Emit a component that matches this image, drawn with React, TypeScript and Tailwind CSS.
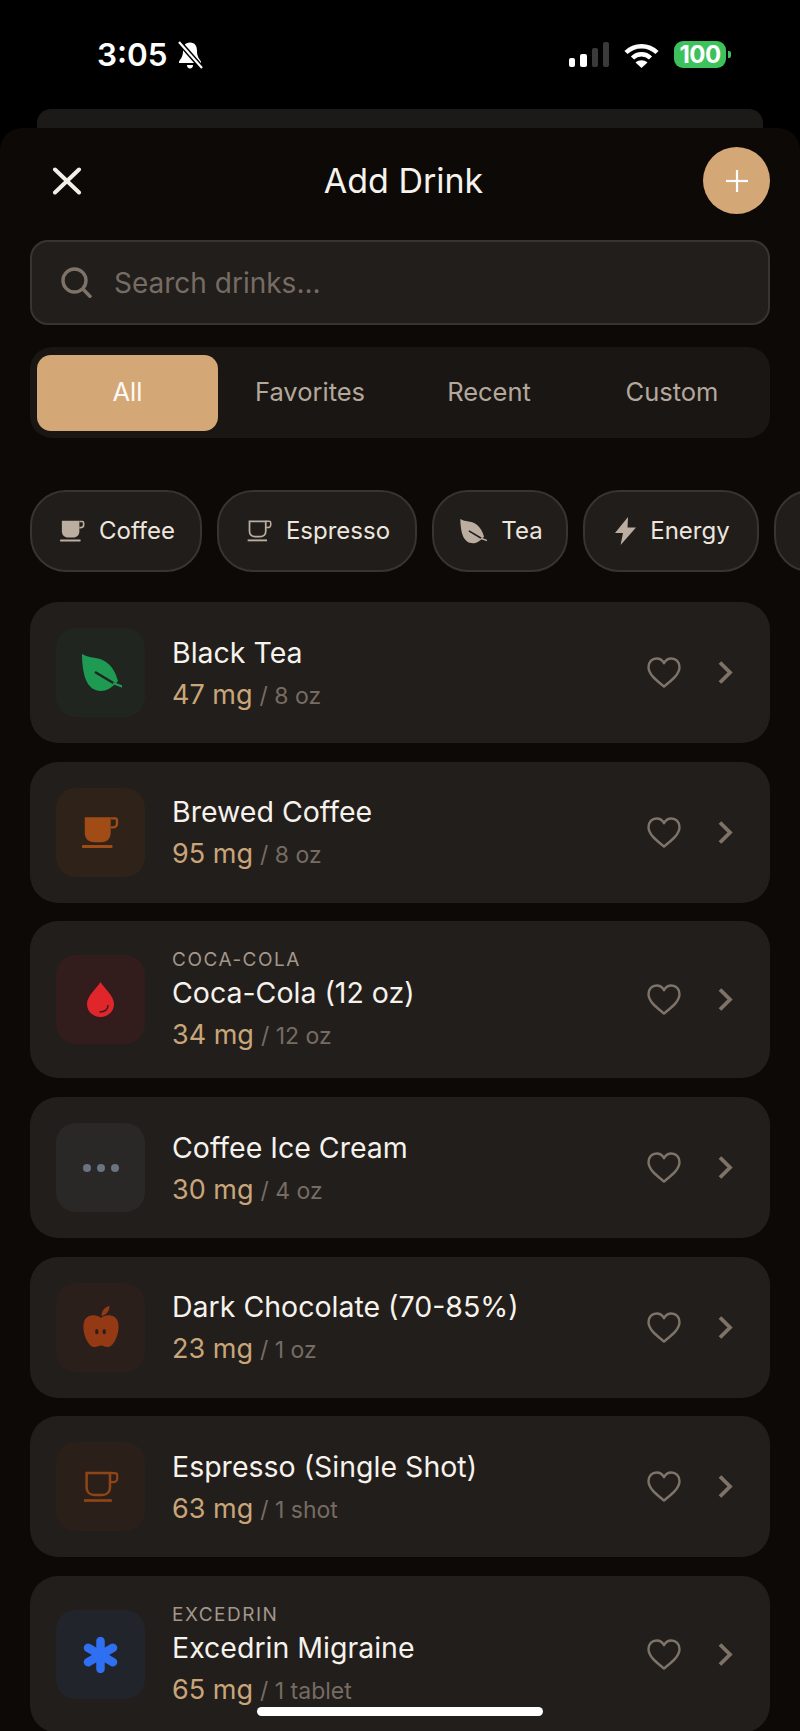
import type { ReactNode } from "react";

const CupFilled = ({ className }: { className: string }) => (
  <svg viewBox="0 0 40 35" className={className} fill="currentColor">
    <path d="M3 1H31V18C31 24 27 28 21 28H13C7 28 3 24 3 18Z" />
    <path d="M31 2.200H35.500C37 2.200 37.800 3 37.800 4.500V8C37.800 10.300 36 12 33.500 12H31" fill="none" stroke="currentColor" strokeWidth="2.600" />
    <rect x="0" y="31" width="33" height="3.200" rx="1" />
  </svg>
);

const CupOutline = ({ className }: { className: string }) => (
  <svg viewBox="0 0 40 35" className={className} fill="none" stroke="currentColor" strokeWidth="2.800">
    <path d="M4 2H30V18C30 23 26.500 26.500 21 26.500H13C7.500 26.500 4 23 4 18Z" />
    <path d="M30 2H35.500C37 2 38 3 38 4.500V8C38 10.500 36 12 33.500 12H30" strokeWidth="2.400" />
    <path d="M1 32.500H32" strokeWidth="3" />
  </svg>
);

const Leaf = ({ className, vein }: { className: string; vein: string }) => (
  <svg viewBox="0 0 40 38" className={className}>
    <path d="M0 0C8 5 16 2 24 8C31 13 34 20 36 27C30 34 24 37 19 37C12 37 7 33 4 26C1 19 0 8 0 0Z" fill="currentColor" />
    <path d="M13 18L33 30" fill="none" stroke={vein} strokeWidth="2.400" />
    <path d="M32 29.500L40 32.500" fill="none" stroke="currentColor" strokeWidth="2.400" strokeLinecap="round" />
  </svg>
);

const Bolt = ({ className }: { className: string }) => (
  <svg viewBox="0 0 21 28" className={className} fill="currentColor">
    <path d="M13 0L0 16H8L5.600 28L21 10.500H12.500Z" />
  </svg>
);

const Drop = ({ className }: { className: string }) => (
  <svg viewBox="0 0 27 35" className={className}>
    <path d="M13.500 0C9 7 0 14 0 22C0 29.500 6 35 13.500 35C21 35 27 29.500 27 22C27 14 18 7 13.500 0Z" fill="currentColor" />
    <path d="M21 23.500C21 27 18 30 13 30" fill="none" stroke="#341d1c" strokeWidth="1.500" strokeLinecap="round" />
  </svg>
);

const Dots = () => (
  <div className="flex gap-[6px]">
    <span className="h-[8px] w-[8px] rounded-full bg-[#6b7280]" />
    <span className="h-[8px] w-[8px] rounded-full bg-[#6b7280]" />
    <span className="h-[8px] w-[8px] rounded-full bg-[#6b7280]" />
  </div>
);

const Apple = ({ className }: { className: string }) => (
  <svg viewBox="0 0 37 42" className={className}>
    <path d="M18.500 12C14 8 4 8 1.500 16C-1 25 5 41 12 41C15 41 16.500 39.500 18.500 39.500C20.500 39.500 22 41 25 41C32 41 38 25 35.500 16C33 8 23 8 18.500 12Z" fill="currentColor" />
    <path d="M19 10C19 5 22 1 27 0C27 5 24 9 19 10Z" fill="currentColor" />
    <ellipse cx="14.300" cy="25.700" rx="1.700" ry="2.600" fill="#2a1f1a" />
    <ellipse cx="21.700" cy="25.700" rx="1.700" ry="2.600" fill="#2a1f1a" />
  </svg>
);

const Asterisk = ({ className }: { className: string }) => (
  <svg viewBox="0 0 35 36" className={className} fill="none" stroke="currentColor" strokeWidth="8.500" strokeLinecap="round">
    <path d="M17.500 4V32" />
    <path d="M5 10.800L30 25.200" />
    <path d="M30 10.800L5 25.200" />
  </svg>
);

const Heart = () => (
  <svg viewBox="0 0 34 31" className="h-[31px] w-[34px] text-[#7d7369]" fill="none" stroke="currentColor" strokeWidth="2.400" strokeLinejoin="round">
    <path d="M17 29.500C11 24.500 1.500 18 1.500 10C1.500 5 5 1.500 9.500 1.500C12.800 1.500 15.500 3.300 17 6.300C18.500 3.300 21.200 1.500 24.500 1.500C29 1.500 32.500 5 32.500 10C32.500 18 23 24.500 17 29.500Z" />
  </svg>
);

const Chevron = () => (
  <svg viewBox="0 0 15 23" className="h-[23px] w-[15px] text-[#7d7369]" fill="none" stroke="currentColor" strokeWidth="3.800">
    <path d="M2 1.500L12 11.500L2 21.500" />
  </svg>
);

type Drink = {
  name: string;
  brand?: string;
  mg: number;
  size: string;
  tile: string;
  icon: ReactNode;
};

const drinks: Drink[] = [
  { name: "Black Tea", mg: 47, size: "8 oz", tile: "bg-[#20251f]", icon: <Leaf className="ml-[3px] h-[38px] w-[40px] text-[#1f9a53]" vein="#20251f" /> },
  { name: "Brewed Coffee", mg: 95, size: "8 oz", tile: "bg-[#2f2219]", icon: <CupFilled className="h-[33px] w-[37px] text-[#a14c17]" /> },
  { name: "Coca-Cola (12 oz)", brand: "COCA-COLA", mg: 34, size: "12 oz", tile: "bg-[#331d1c]", icon: <Drop className="h-[35px] w-[27px] text-[#e0262b]" /> },
  { name: "Coffee Ice Cream", mg: 30, size: "4 oz", tile: "bg-[#2a2826]", icon: <Dots /> },
  { name: "Dark Chocolate (70-85%)", mg: 23, size: "1 oz", tile: "bg-[#2a1f1a]", icon: <Apple className="h-[42px] w-[38px] text-[#933a15]" /> },
  { name: "Espresso (Single Shot)", mg: 63, size: "1 shot", tile: "bg-[#2b1f19]", icon: <CupOutline className="h-[32px] w-[36px] text-[#8f4518]" /> },
  { name: "Excedrin Migraine", brand: "EXCEDRIN", mg: 65, size: "1 tablet", tile: "bg-[#22242c]", icon: <Asterisk className="h-[36px] w-[35px] text-[#2f6ff2]" /> },
];

const chips = [
  { label: "Coffee", width: "w-[172px]", icon: <CupFilled className="h-[22px] w-[25px] text-[#bbaea1]" /> },
  { label: "Espresso", width: "w-[200px]", icon: <CupOutline className="h-[22px] w-[25px] text-[#bbaea1]" /> },
  { label: "Tea", width: "w-[136px]", icon: <Leaf className="h-[25px] w-[27px] text-[#bbaea1]" vein="#211d1a" /> },
  { label: "Energy", width: "w-[176px]", icon: <Bolt className="h-[28px] w-[21px] text-[#bbaea1]" /> },
];

function StatusBar() {
  return (
    <div className="flex h-[109px] items-start justify-between pl-[97px] pr-[69px] pt-[37px]">
      <div className="flex items-center gap-[9px]">
        <span className="text-[31.500px] font-semibold leading-[36px] text-white">3:05</span>
        <svg viewBox="0 0 26 28" className="h-[28px] w-[26px]" fill="white">
          <path d="M13 1.500C8 1.500 6 5 6 10C6 15 4.500 17 2 20.500V22H24V20.500C21.500 17 20 15 20 10C20 5 18 1.500 13 1.500Z" />
          <path d="M10 24H16C16 26 14.800 27.500 13 27.500C11.200 27.500 10 26 10 24Z" />
          <path d="M3 2L24 26" stroke="black" strokeWidth="5" />
          <path d="M2 1L25 27" stroke="white" strokeWidth="2.200" />
        </svg>
      </div>
      <div className="flex items-end gap-[15px] pt-[4px]">
        <div className="flex items-end gap-[5px] pb-[1px]">
          <span className="h-[9px] w-[6px] rounded-[2px] bg-white" />
          <span className="h-[13px] w-[7px] rounded-[2px] bg-white" />
          <span className="h-[19px] w-[6px] rounded-[2px] bg-[#3a3a3a]" />
          <span className="h-[25px] w-[6px] rounded-[2px] bg-[#3a3a3a]" />
        </div>
        <svg viewBox="0 0 35 25" className="h-[25px] w-[35px]" fill="none" stroke="white" strokeWidth="4.500">
          <path d="M2 9.500C10.500 1 24.500 1 33 9.500" />
          <path d="M8.500 15C13.500 10 21.500 10 26.500 15" />
          <path d="M17.500 25L11.500 19.500C15 16.500 20 16.500 23.500 19.500Z" fill="white" stroke="none" />
        </svg>
        <div className="flex items-center gap-[2px]">
          <div className="flex h-[27px] w-[52px] items-center justify-center rounded-[9px] bg-[#3cc15c] text-[24px] font-bold tracking-[-0.500px] text-white">
            100
          </div>
          <span className="h-[7px] w-[3px] rounded-r-[2px] bg-[#3cc15c]" />
        </div>
      </div>
    </div>
  );
}

function DrinkRow({ drink }: { drink: Drink }) {
  return (
    <div className="flex min-h-[141px] items-center rounded-[28px] bg-[#221e1b] py-[21px] pl-[26px] pr-[37px]">
      <div className={`flex h-[89px] w-[89px] shrink-0 items-center justify-center rounded-[20px] ${drink.tile}`}>
        {drink.icon}
      </div>
      <div className="ml-[27px] flex-1 pt-[5px]">
        {drink.brand && (
          <div className="mb-[2px] text-[19px] leading-[25px] tracking-[1.500px] text-[#a3978b]">{drink.brand}</div>
        )}
        <div className="text-[28.500px] leading-[38px] text-[#f6f2ec]">{drink.name}</div>
        <div className="mt-[4px] leading-[38px]">
          <span className="text-[27px] text-[#c9a57a]">{drink.mg} mg</span>
          <span className="ml-[7px] text-[23px] text-[#766c63]">/ {drink.size}</span>
        </div>
      </div>
      <div className="flex items-center gap-[37px]">
        <Heart />
        <Chevron />
      </div>
    </div>
  );
}

export default function App() {
  return (
    <div className="relative h-[1731px] w-[800px] overflow-hidden bg-black [font-family:Inter,sans-serif]">
      <StatusBar />
      <div className="mx-[37px] h-[19px] rounded-t-[14px] bg-[#1c1a18]" />
      <div className="rounded-t-[22px] bg-[#0c0907] px-[30px] pt-[19px]">
        <div className="flex items-center">
          <div className="flex w-[67px] justify-start pl-[22px]">
            <svg viewBox="0 0 30 28" className="h-[28px] w-[30px] text-[#f3efe8]" fill="none" stroke="currentColor" strokeWidth="4" strokeLinecap="round">
              <path d="M3 2.500L27 25.500" />
              <path d="M27 2.500L3 25.500" />
            </svg>
          </div>
          <div className="flex-1 pl-[7px] text-center text-[34px] text-[#f6f2ec]">Add Drink</div>
          <div className="flex h-[67px] w-[67px] items-center justify-center rounded-full bg-[#d4a776]">
            <svg viewBox="0 0 22 22" className="h-[22px] w-[22px]" fill="none" stroke="white" strokeWidth="2.200">
              <path d="M11 0V22" />
              <path d="M0 11H22" />
            </svg>
          </div>
        </div>

        <div className="mt-[26px] flex h-[85px] items-center rounded-[18px] border-2 border-[#3a342e] bg-[#221e1b] pl-[29px]">
          <svg viewBox="0 0 31 31" className="h-[31px] w-[31px] text-[#7d7369]" fill="none" stroke="currentColor" strokeWidth="3.400">
            <circle cx="13.500" cy="13.500" r="11.500" />
            <path d="M21.500 21.500L30 30.500" />
          </svg>
          <span className="ml-[22px] text-[28px] text-[#766c63]">Search drinks...</span>
        </div>

        <div className="mt-[22px] flex h-[91px] items-center rounded-[22px] bg-[#1a1614] px-[7px]">
          <div className="flex h-[76px] w-[181px] shrink-0 items-center justify-center rounded-[14px] bg-[#d4a776] text-[25.500px] text-[#fdf9f3]">
            All
          </div>
          <div className="flex items-center text-[25.500px] text-[#b4a89c]">
            <span className="w-[184px] shrink-0 text-center">Favorites</span>
            <span className="w-[174px] shrink-0 text-center">Recent</span>
            <span className="w-[192px] shrink-0 text-center">Custom</span>
          </div>
        </div>

        <div className="-mr-[30px] mt-[52px] flex gap-[15px] overflow-hidden">
          {chips.map((chip) => (
            <div
              key={chip.label}
              className={`flex h-[82px] shrink-0 items-center justify-center gap-[14px] rounded-[36px] border-2 border-[#3a342e] bg-[#211d1a] pl-[3px] text-[24px] text-[#ece6de] ${chip.width}`}
            >
              {chip.icon}
              <span>{chip.label}</span>
            </div>
          ))}
          <div className="h-[82px] w-[150px] shrink-0 rounded-[36px] border-2 border-[#3a342e] bg-[#211d1a]" />
        </div>

        <div className="mt-[30px] flex flex-col gap-[18.700px]">
          {drinks.map((drink) => (
            <DrinkRow key={drink.name} drink={drink} />
          ))}
        </div>
      </div>
      <div className="absolute bottom-[15px] left-[257px] h-[9px] w-[286px] rounded-full bg-white" />
    </div>
  );
}
